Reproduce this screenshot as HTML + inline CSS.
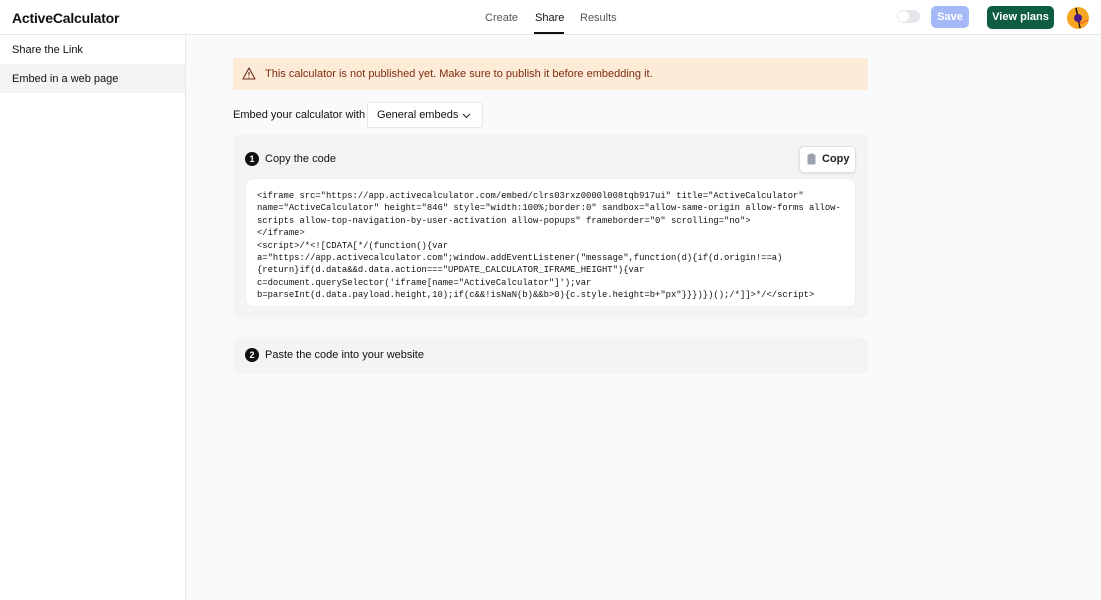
<!DOCTYPE html>
<html><head><meta charset="utf-8"><style>
*{box-sizing:border-box;margin:0;padding:0}
body{width:1101px;height:600px;overflow:hidden;font-family:"Liberation Sans",sans-serif;color:#111;background:#f9fafb;position:relative}
.hdr{position:absolute;left:0;top:0;width:1101px;height:35px;background:#fff;border-bottom:1px solid #e5e7eb}
.logo{position:absolute;left:12px;top:10px;font-size:14px;font-weight:bold;letter-spacing:-0.2px;color:#111}
.tab{position:absolute;top:12px;font-size:11px;color:#555}
.side{position:absolute;left:0;top:35px;width:186px;height:565px;background:#fff;border-right:1px solid #e5e7eb}
.si{height:29px;line-height:30px;padding-left:12px;font-size:11px;color:#111}
.abs{position:absolute}
.code{font-family:"Liberation Mono",monospace;font-size:8.85px;line-height:12.4px;color:#111;white-space:pre}
</style></head><body>
<div class="hdr">
 <div class="logo">ActiveCalculator</div>
 <div class="tab" style="left:485px">Create</div>
 <div class="tab" style="left:535px;color:#111">Share</div>
 <div class="abs" style="left:534px;top:32px;width:30px;height:2px;background:#111"></div>
 <div class="tab" style="left:580px">Results</div>
 <div class="abs" style="left:897px;top:10px;width:23px;height:13px;border-radius:7px;background:#e5e7eb"><div style="position:absolute;left:1px;top:1px;width:11px;height:11px;border-radius:50%;background:#fff"></div></div>
 <div class="abs" style="left:931px;top:6px;width:38px;height:22px;border-radius:5px;background:#a5b8f7;color:#fff;font-size:11px;font-weight:bold;text-align:center;line-height:22px">Save</div>
 <div class="abs" style="left:987px;top:6px;width:67px;height:23px;border-radius:5px;background:#0f5c45;color:#fff;font-size:11px;font-weight:bold;text-align:center;line-height:23px">View plans</div>
 <svg class="abs" style="left:1066px;top:6px" width="24" height="24" viewBox="0 0 24 24"><circle cx="12" cy="12" r="11" fill="#f6a623"/><line x1="10" y1="2" x2="14" y2="22" stroke="#111" stroke-width="1.5"/><circle cx="12" cy="12" r="4" fill="#4b1a8a"/><line x1="13" y1="18" x2="22" y2="14" stroke="#e33" stroke-width="0.8"/></svg>
</div>
<div class="side">
 <div class="si">Share the Link</div>
 <div class="si" style="background:#f3f4f6">Embed in a web page</div>
</div>
<div class="abs" style="left:233px;top:58px;width:635px;height:32px;background:#fdebd8;border-radius:2px"></div>
<svg class="abs" style="left:242px;top:67px" width="14" height="13" viewBox="0 0 14 13"><path d="M7 1L13 12H1Z" fill="none" stroke="#6b2a1a" stroke-width="1.1" stroke-linejoin="round"/><line x1="7" y1="5" x2="7" y2="8.5" stroke="#6b2a1a" stroke-width="1.1"/><circle cx="7" cy="10.2" r="0.6" fill="#6b2a1a"/></svg>
<div class="abs" style="left:265px;top:68px;font-size:11px;color:#7c2d12">This calculator is not published yet. Make sure to publish it before embedding it.</div>
<div class="abs" style="left:233px;top:109px;font-size:11px">Embed your calculator with</div>
<div class="abs" style="left:367px;top:102px;width:116px;height:26px;background:#fff;border:1px solid #e5e7eb;border-radius:3px;font-size:11px;line-height:25px;padding-left:9px">General embeds <svg style="position:absolute;left:94px;top:10px" width="9" height="6" viewBox="0 0 9 6"><path d="M1 1l3.5 3.5L8 1" fill="none" stroke="#333" stroke-width="1.2"/></svg></div>
<div class="abs" style="left:233px;top:134px;width:635px;height:185px;background:#f3f4f6;border-radius:8px"></div>
<div class="abs" style="left:245px;top:152px;width:14px;height:14px;border-radius:50%;background:#111;color:#fff;font-size:9px;font-weight:bold;text-align:center;line-height:14px">1</div>
<div class="abs" style="left:265px;top:153px;font-size:11px">Copy the code</div>
<div class="abs" style="left:799px;top:146px;width:57px;height:27px;background:#fff;border:1px solid #e0e0e0;border-radius:5px;box-shadow:0 1px 2px rgba(0,0,0,.08)"></div>
<svg class="abs" style="left:807px;top:153px" width="9" height="12" viewBox="0 0 9 12"><rect x="0.5" y="1.5" width="8" height="10" rx="1" fill="#9ca3af"/><rect x="2.5" y="0.5" width="4" height="2" rx="0.5" fill="#9ca3af"/></svg>
<div class="abs" style="left:822px;top:153px;font-size:11px;font-weight:bold;color:#222">Copy</div>
<div class="abs" style="left:245px;top:178px;width:611px;height:129px;background:#fff;border-radius:8px;border:1px solid #eceef0"></div>
<div class="abs code" style="left:257px;top:190px">&lt;iframe src="https://app.activecalculator.com/embed/clrs03rxz0000l008tqb917ui" title="ActiveCalculator"
name="ActiveCalculator" height="846" style="width:100%;border:0" sandbox="allow-same-origin allow-forms allow-
scripts allow-top-navigation-by-user-activation allow-popups" frameborder="0" scrolling="no"&gt;
&lt;/iframe&gt;
&lt;script&gt;/*&lt;![CDATA[*/(function(){var
a="https://app.activecalculator.com";window.addEventListener("message",function(d){if(d.origin!==a)
{return}if(d.data&amp;&amp;d.data.action==="UPDATE_CALCULATOR_IFRAME_HEIGHT"){var
c=document.querySelector('iframe[name="ActiveCalculator"]');var
b=parseInt(d.data.payload.height,10);if(c&amp;&amp;!isNaN(b)&amp;&amp;b&gt;0){c.style.height=b+"px"}}})})();/*]]&gt;*/&lt;/script&gt;</div>
<div class="abs" style="left:233px;top:337px;width:635px;height:37px;background:#f3f4f6;border-radius:8px"></div>
<div class="abs" style="left:245px;top:348px;width:14px;height:14px;border-radius:50%;background:#111;color:#fff;font-size:9px;font-weight:bold;text-align:center;line-height:14px">2</div>
<div class="abs" style="left:265px;top:349px;font-size:11px">Paste the code into your website</div>
</body></html>
